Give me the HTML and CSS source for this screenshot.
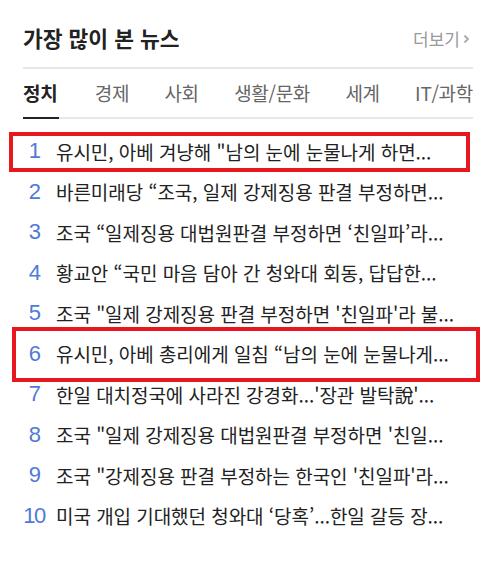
FILE: index.html
```html
<!DOCTYPE html>
<html lang="ko">
<head>
<meta charset="utf-8">
<title>가장 많이 본 뉴스</title>
<link rel="stylesheet" href="styles.css">
</head>
<body>
<section class="ranking">
  <header class="ranking-head">
    <h2 class="ranking-title">가장 많이 본 뉴스</h2>
    <a class="more" href="#">더보기<svg class="more-arrow" width="7" height="10" viewBox="0 0 7 10"><path d="M1.5 1.5 L5 5 L1.5 8.5" fill="none" stroke="#aaa" stroke-width="1.8"/></svg></a>
  </header>
  <nav class="tabs">
    <a class="tab active" href="#">정치</a>
    <a class="tab" href="#">경제</a>
    <a class="tab" href="#">사회</a>
    <a class="tab" href="#">생활/문화</a>
    <a class="tab" href="#">세계</a>
    <a class="tab" href="#">IT/과학</a>
  </nav>
  <ol class="news">
    <li class="item"><span class="rank">1</span><span class="headline">유시민, 아베 겨냥해 "남의 눈에 눈물나게 하면...</span></li>
    <li class="item"><span class="rank">2</span><span class="headline">바른미래당 “조국, 일제 강제징용 판결 부정하면...</span></li>
    <li class="item"><span class="rank">3</span><span class="headline">조국 “일제징용 대법원판결 부정하면 ‘친일파’라...</span></li>
    <li class="item"><span class="rank">4</span><span class="headline">황교안 “국민 마음 담아 간 청와대 회동, 답답한...</span></li>
    <li class="item"><span class="rank">5</span><span class="headline">조국 "일제 강제징용 판결 부정하면 '친일파'라 불...</span></li>
    <li class="item"><span class="rank">6</span><span class="headline">유시민, 아베 총리에게 일침 “남의 눈에 눈물나게...</span></li>
    <li class="item"><span class="rank">7</span><span class="headline">한일 대치정국에 사라진 강경화...'장관 발탁說'...</span></li>
    <li class="item"><span class="rank">8</span><span class="headline">조국 "일제 강제징용 대법원판결 부정하면 '친일...</span></li>
    <li class="item"><span class="rank">9</span><span class="headline">조국 "강제징용 판결 부정하는 한국인 '친일파'라...</span></li>
    <li class="item"><span class="rank">10</span><span class="headline">미국 개입 기대했던 청와대 ‘당혹’...한일 갈등 장...</span></li>
  </ol>
  <div class="mark mark-first"></div>
  <div class="mark mark-sixth"></div>
</section>
</body>
</html>
```

FILE: styles.css
```css
* {
  box-sizing: border-box;
}

html, body {
  margin: 0;
  background: #fff;
}

body {
  font-family: "Noto Sans CJK KR", "Noto Sans", sans-serif;
  color: #222;
}

.ranking {
  position: relative;
  width: 487px;
  padding: 24px 14px 0 23px;
}

.ranking-head {
  display: flex;
  justify-content: space-between;
  align-items: center;
  height: 28px;
  margin-bottom: 15px;
}

.ranking-title {
  margin: 0;
  font-size: 21.5px;
  font-weight: 700;
  line-height: 28px;
  color: #222;
}

.more {
  display: flex;
  align-items: center;
  gap: 3px;
  font-size: 17px;
  color: #999;
  text-decoration: none;
  margin-right: 3px;
}

.more-arrow {
  margin-top: 2px;
}

.tabs {
  display: flex;
  justify-content: space-between;
  border-top: 2px solid #e8e8e8;
  border-bottom: 2px solid #e8e8e8;
  height: 52px;
}

.tab {
  display: flex;
  align-items: center;
  height: 50px;
  padding: 0 0 2px;
  margin-bottom: -2px;
  font-size: 19px;
  color: #666;
  text-decoration: none;
  border-bottom: 2px solid transparent;
  letter-spacing: -0.3px;
}

.tab.active {
  font-weight: 700;
  color: #222;
  border-bottom-color: #222;
  padding-right: 2px;
}

.news {
  list-style: none;
  margin: 0;
  padding: 12px 0 0;
}

.item {
  display: flex;
  align-items: center;
  height: 40.5px;
}

.rank {
  width: 24px;
  flex: none;
  text-align: center;
  font-family: "Liberation Sans", Arial, sans-serif;
  font-size: 22px;
  color: #5079d8;
  margin: 0 10px 0 -1px;
  letter-spacing: -1.5px;
}

.headline {
  font-size: 19px;
  color: #222;
  white-space: nowrap;
  letter-spacing: -0.05px;
}

.mark {
  position: absolute;
  border: 4px solid #e8161f;
  pointer-events: none;
}

.mark-first {
  left: 9px;
  top: 132px;
  width: 461px;
  height: 40px;
}

.mark-sixth {
  left: 12px;
  top: 327px;
  width: 468px;
  height: 55px;
}
```
